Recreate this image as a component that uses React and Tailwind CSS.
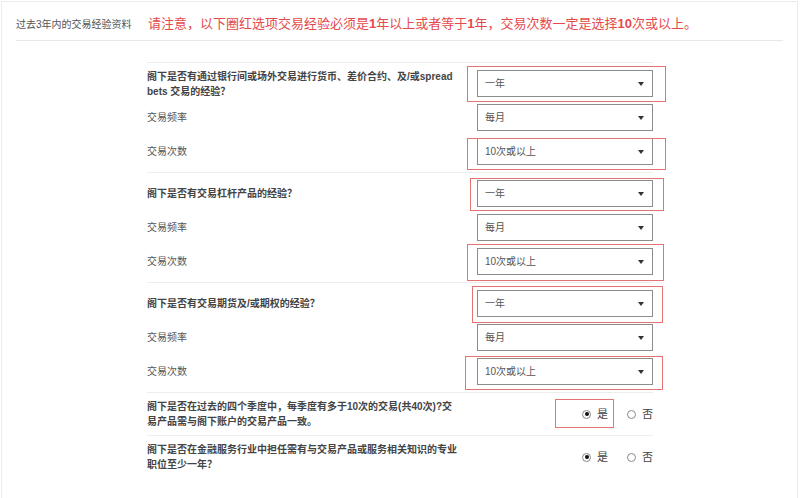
import React from "react";

function RedBox({ className }) {
  return <span className={"pointer-events-none absolute block border border-solid border-[#e57373] " + className} />;
}

function Select({ value, red }) {
  return (
    <div className="relative h-[27px] w-[176px] shrink-0">
      <div className="flex h-full items-center justify-between border border-[#8c8c8c] bg-white pl-[7px] pr-[8px] text-[10px] text-[#555]">
        <span>{value}</span>
        <span className="h-0 w-0 border-x-[3px] border-t-[4px] border-x-transparent border-t-[#333]" />
      </div>
      {red}
    </div>
  );
}

function Radio({ checked, label, red }) {
  return (
    <span className="relative flex items-center gap-[6px]">
      <span className="flex h-[9px] w-[9px] items-center justify-center rounded-full border border-[#888] bg-white">
        {checked && <span className="h-[4px] w-[4px] rounded-full bg-[#111]" />}
      </span>
      <span className="text-[11px] leading-[11px] text-[#444]">{label}</span>
      {red}
    </span>
  );
}

const groups = [
  {
    q: (
      <>
        阁下是否有通过银行间或场外交易进行货币、差价合约、及/或spread
        <br />
        bets 交易的经验？
      </>
    ),
    reds: [
      <RedBox className="-left-[10px] -right-[13px] -top-[4px] -bottom-[5px]" />,
      <RedBox className="-left-[10px] -right-[13px] top-[0px] -bottom-[5px]" />,
    ],
  },
  {
    q: <>阁下是否有交易杠杆产品的经验？</>,
    reds: [
      <RedBox className="-left-[7px] -right-[11px] -top-[2px] -bottom-[4px]" />,
      <RedBox className="-left-[10px] -right-[11px] -top-[4px] -bottom-[6px]" />,
    ],
  },
  {
    q: <>阁下是否有交易期货及/或期权的经验？</>,
    reds: [
      <RedBox className="-left-[5px] -right-[10px] -top-[4px] -bottom-[6px]" />,
      <RedBox className="-left-[12px] -right-[10px] -top-[2px] -bottom-[5px]" />,
    ],
  },
];

export default function App() {
  return (
    <div className="h-[498px] w-[800px] overflow-hidden bg-white font-['Liberation_Sans','Noto_Sans_CJK_SC',sans-serif]">
      <div className="ml-px mt-px h-[497px] w-[797px] border-l border-r border-t border-[#ececec]">
        {/* header */}
        <div className="mx-[14px] flex h-[39px] items-center border-b border-[#e8e8e8] pt-[6px]">
          <div className="w-[132px] text-[10px] text-[#555]">过去3年内的交易经验资料</div>
          <div className="whitespace-nowrap text-[13px] text-[#e4494c]">
            请注意，以下圈红选项交易经验必须是<b>1</b>年以上或者等于<b>1</b>年，交易次数一定是选择<b>10</b>次或以上。
          </div>
        </div>

        {/* body */}
        <div className="ml-[145px] w-[506px] pt-[21px]">
          {groups.map((g, i) => (
            <div key={i} className="flex flex-col gap-[7px] border-t border-[#ededed] pb-[7px] pt-[7px]">
              <div className="flex h-[27px] items-center justify-between">
                <p className="whitespace-nowrap text-[10px] font-bold leading-[15px] text-[#444]">{g.q}</p>
                <Select value="一年" red={g.reds[0]} />
              </div>
              <div className="flex h-[27px] items-center justify-between">
                <p className="text-[10px] text-[#555]">交易频率</p>
                <Select value="每月" />
              </div>
              <div className="flex h-[27px] items-center justify-between">
                <p className="text-[10px] text-[#555]">交易次数</p>
                <Select value="10次或以上" red={g.reds[1]} />
              </div>
            </div>
          ))}

          <div className="flex items-center justify-between border-t border-[#ededed] py-[6px]">
            <p className="whitespace-nowrap text-[10px] font-bold leading-[15px] text-[#444]">
              阁下是否在过去的四个季度中，每季度有多于10次的交易(共40次)?交
              <br />
              易产品需与阁下账户的交易产品一致。
            </p>
            <div className="flex items-center gap-[19px]">
              <Radio checked label="是" red={<RedBox className="-left-[27px] -right-[6px] -top-[10px] -bottom-[8px]" />} />
              <Radio label="否" />
            </div>
          </div>

          <div className="flex items-center justify-between border-t border-[#ededed] py-[6px]">
            <p className="whitespace-nowrap text-[10px] font-bold leading-[15px] text-[#444]">
              阁下是否在金融服务行业中担任需有与交易产品或服务相关知识的专业
              <br />
              职位至少一年？
            </p>
            <div className="flex items-center gap-[19px]">
              <Radio checked label="是" />
              <Radio label="否" />
            </div>
          </div>
        </div>
      </div>
    </div>
  );
}
